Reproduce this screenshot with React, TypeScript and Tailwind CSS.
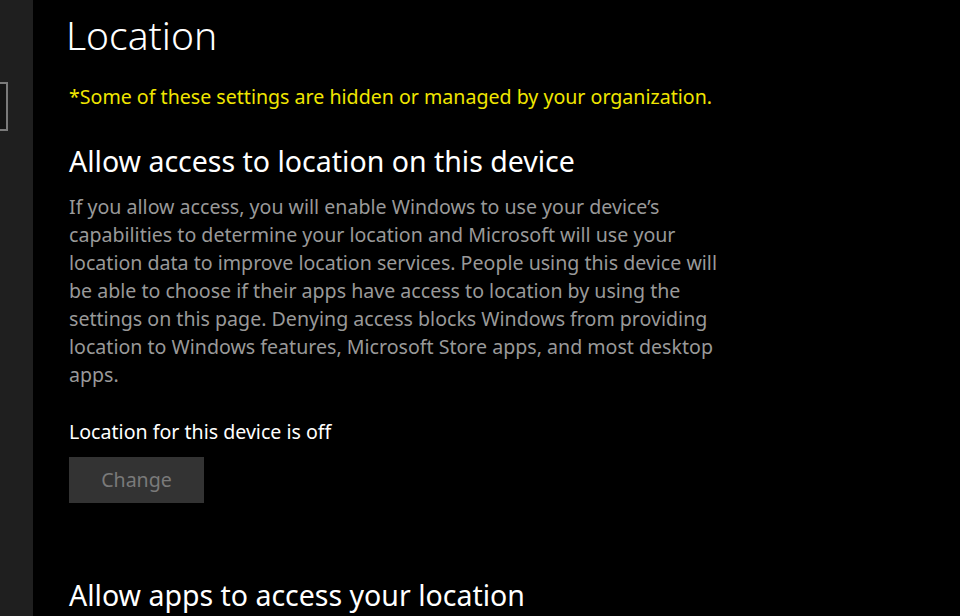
import React from 'react';

const font = { fontFamily: '"Noto Sans", "Open Sans", sans-serif' };

const Sidebar = () => (
  <div className="w-[33px] shrink-0 bg-[#1f1f1f] pt-[82px]">
    <div className="w-[8px] h-[49px] border-2 border-l-0 border-[#7a7a7a] bg-[#141414]" />
  </div>
);

const LocationPage = () => {
  return (
    <div className="flex h-[616px] w-[960px] overflow-hidden bg-black" style={font}>
      <Sidebar />
      <main className="flex-1 pl-[36px] pt-[8px]">
        <h1 className="-ml-[3px] text-[39px] font-light leading-[54px] text-white">Location</h1>
        <p className="mt-[22px] text-[19.6px] leading-[26px] text-[#f0e600]">
          *Some of these settings are hidden or managed by your organization.
        </p>

        <h2 className="mt-[33px] text-[28.5px] leading-[36px] text-white">Allow access to location on this device</h2>
        <p className="mt-[14px] w-[720px] text-[19.6px] leading-[28px] text-[#999999]">
          If you allow access, you will enable Windows to use your device’s
          <br />
          capabilities to determine your location and Microsoft will use your
          <br />
          location data to improve location services. People using this device will
          <br />
          be able to choose if their apps have access to location by using the
          <br />
          settings on this page. Denying access blocks Windows from providing
          <br />
          location to Windows features, Microsoft Store apps, and most desktop
          <br />
          apps.
        </p>

        <p className="mt-[30px] text-[19.6px] leading-[26px] text-white">Location for this device is off</p>
        <button className="mt-[12px] h-[46px] w-[135px] bg-[#333333] text-[19.6px] text-[#7a7a7a]">Change</button>

        <h2 className="mt-[74px] text-[28.5px] leading-[36px] text-white">Allow apps to access your location</h2>
      </main>
    </div>
  );
};

export default function App() {
  return <LocationPage />;
}
